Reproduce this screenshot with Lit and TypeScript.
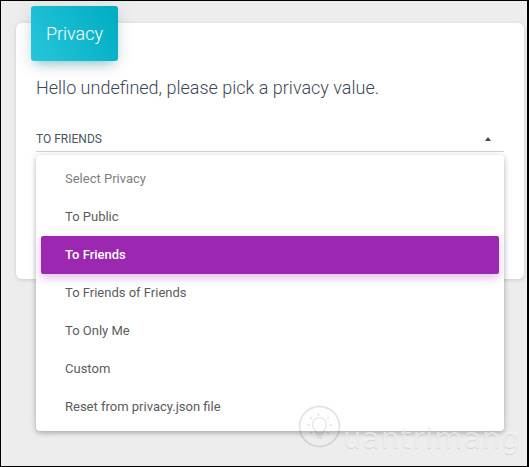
import { LitElement, html, css, svg } from "lit";
import { customElement } from "lit/decorators.js";

const ITEMS = [
  { label: "Select Privacy", cls: "muted" },
  { label: "To Public", cls: "" },
  { label: "To Friends", cls: "active" },
  { label: "To Friends of Friends", cls: "" },
  { label: "To Only Me", cls: "" },
  { label: "Custom", cls: "" },
  { label: "Reset from privacy.json file", cls: "" },
];

@customElement("app-root")
export class AppRoot extends LitElement {
  static styles = css`
    :host {
      display: block;
      width: 529px;
      height: 467px;
      font-family: Roboto, "Liberation Sans", sans-serif;
    }
    .page {
      box-sizing: border-box;
      position: relative;
      width: 529px;
      height: 467px;
      background: #ededed;
      border-style: solid;
      border-color: #000;
      border-width: 1px 2px 1px 1px;
      padding: 22px 3px 0 15px;
      overflow: hidden;
    }
    .card {
      position: relative;
      display: flow-root;
      box-sizing: border-box;
      height: 256px;
      background: #fff;
      border-radius: 6px;
      box-shadow: 0 1px 4px rgba(0, 0, 0, 0.14);
      padding: 0 20px;
    }
    .header {
      box-sizing: border-box;
      width: 87px;
      height: 55px;
      margin: -17px 0 0 -5px;
      border-radius: 3px;
      background: linear-gradient(60deg, #26c6da, #00acc1);
      box-shadow: 0 4px 18px rgba(0, 0, 0, 0.12), 0 7px 10px -5px rgba(0, 172, 193, 0.4);
      color: #fff;
      font-size: 18px;
      font-weight: 300;
      display: flex;
      align-items: center;
      justify-content: center;
    }
    .hello {
      margin: 15px 0 0 0;
      font-size: 18px;
      line-height: 24px;
      font-weight: 300;
      color: #3c4858;
      white-space: nowrap;
    }
    .select {
      box-sizing: border-box;
      margin-top: 26px;
      height: 26px;
      border-bottom: 1px solid #d2d2d2;
      display: flex;
      align-items: center;
      justify-content: space-between;
      font-size: 12px;
      color: #4a5563;
      padding-right: 13px;
    }
    .arrow {
      width: 0;
      height: 0;
      border-left: 3.5px solid transparent;
      border-right: 3.5px solid transparent;
      border-bottom: 4px solid #3c4858;
    }
    .menu {
      position: absolute;
      left: 20px;
      top: 132px;
      width: 468px;
      height: 276px;
      box-sizing: border-box;
      padding: 5px;
      background: #fff;
      border-radius: 4px;
      box-shadow: 0 2px 5px rgba(0, 0, 0, 0.26), 0 0 12px rgba(0, 0, 0, 0.06);
    }
    .item {
      box-sizing: border-box;
      height: 38px;
      padding: 0 0 2px 24px;
      display: flex;
      align-items: center;
      font-size: 13px;
      color: #5c5c5c;
      border-radius: 2px;
    }
    .muted {
      color: #808080;
    }
    .active {
      background: #9c27b0;
      color: #fff;
      font-weight: 500;
      box-shadow: 0 4px 10px rgba(156, 39, 176, 0.3);
    }
    .mark {
      position: absolute;
      left: 296px;
      top: 403px;
      display: flex;
      align-items: flex-start;
      pointer-events: none;
    }
    .word {
      margin-left: 1px;
      margin-top: 17px;
      font-family: "DejaVu Sans", sans-serif;
      font-size: 29px;
      font-weight: 400;
      letter-spacing: 0.9px;
      color: rgba(255, 255, 255, 0.55);
      text-shadow: 0 1px 1px rgba(0, 0, 0, 0.1);
    }
  `;

  private bulb() {
    return svg`<svg width="45" height="45" viewBox="0 0 45 45" fill="none" stroke="#000" stroke-opacity="0.1">
      <circle cx="22.5" cy="22.5" r="20" stroke-width="2"/>
      <path stroke-width="1.4" d="M17 25a7 7 0 1 1 11 0c-1 1.500-2 2-2 4h-7c0-2-1-2.500-2-4zM19 31h7M20 33.500h5M21.500 9v3M13 13l2 2M32 13l-2 2M10 21h3M35 21h-3M13 30l2-2M32 30l-2-2"/>
    </svg>`;
  }

  render() {
    return html`
      <div class="page">
        <div class="card">
          <div class="header">Privacy</div>
          <div class="hello">Hello undefined, please pick a privacy value.</div>
          <div class="select"><span>TO FRIENDS</span><span class="arrow"></span></div>
          <div class="menu">
            ${ITEMS.map((i) => html`<div class="item ${i.cls}">${i.label}</div>`)}
          </div>
        </div>
        <div class="mark">${this.bulb()}<span class="word">uantrimang</span></div>
      </div>
    `;
  }
}
